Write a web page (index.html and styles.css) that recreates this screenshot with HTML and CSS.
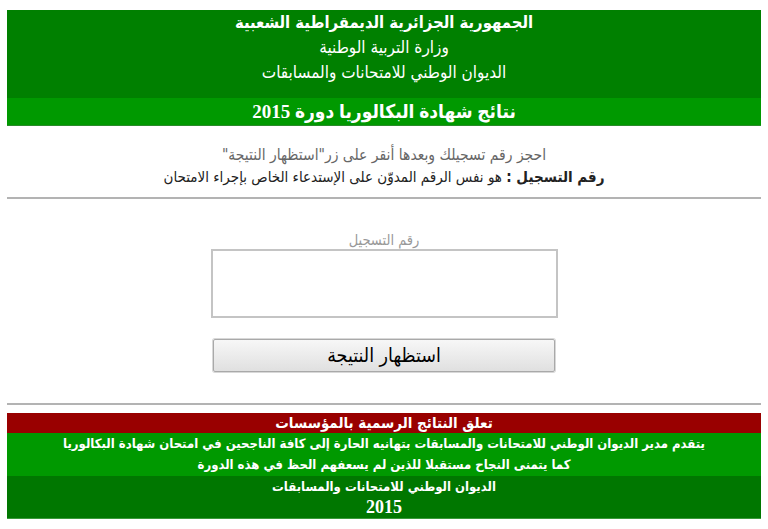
FILE: index.html
```html
<!DOCTYPE html>
<html lang="ar" dir="rtl">
<head>
  <meta charset="UTF-8">
  <title>نتائج شهادة البكالوريا دورة 2015</title>
  <link rel="stylesheet" href="styles.css">
</head>
<body>

  <!-- رأس الصفحة -->
  <div class="entete">
    <div class="titres">
      <p class="republique">الجمهورية الجزائرية الديمقراطية الشعبية</p>
      <p>وزارة التربية الوطنية</p>
      <p>الديوان الوطني للامتحانات والمسابقات</p>
    </div>
    <div class="session">نتائج شهادة البكالوريا دورة 2015</div>
  </div>

  <div class="consigne">
    <p class="gris">احجز رقم تسجيلك وبعدها أنقر على زر"استظهار النتيجة"</p>
    <p><strong>رقم التسجيل :</strong> هو نفس الرقم المدوّن على الإستدعاء الخاص بإجراء الامتحان</p>
  </div>

  <hr>

  <!-- نموذج البحث -->
  <form class="recherche" onsubmit="event.preventDefault()">
    <label for="matricule">رقم التسجيل</label>
    <textarea id="matricule"></textarea>
    <button type="submit">استظهار النتيجة</button>
  </form>

  <hr>

  <!-- التذييل -->
  <div class="pied">
    <div class="avis">تعلق النتائج الرسمية بالمؤسسات</div>
    <div class="felicitations">
      <p>يتقدم مدير الديوان الوطني للامتحانات والمسابقات بتهانيه الحارة إلى كافة الناجحين في امتحان شهادة البكالوريا</p>
      <p>كما يتمنى النجاح مستقبلا للذين لم يسعفهم الحظ في هذه الدورة</p>
    </div>
    <div class="signature">
      <p>الديوان الوطني للامتحانات والمسابقات</p>
      <p class="annee">2015</p>
    </div>
  </div>

</body>
</html>
```

FILE: styles.css
```css
body {
  font-family: "Liberation Serif", "DejaVu Sans", serif;
  background-color: #fff;
  margin: 0;
  padding: 10px 7px;
}

p {
  margin: 0;
}

.entete {
  color: #fff;
  text-align: center;
  border-bottom: 1px solid #2a8a2a;
}

.titres {
  background-color: #008000;
  padding: 0 0 13px;
}

.titres p {
  font-family: "DejaVu Sans Condensed", "DejaVu Sans", sans-serif;
  font-size: 17px;
  line-height: 25px;
}

.titres .republique {
  font-weight: bold;
  font-size: 16.5px;
}

.session {
  background-color: #009900;
  font-family: "Liberation Serif", "DejaVu Sans Condensed", serif;
  font-weight: bold;
  font-size: 19px;
  line-height: 27px;
}

.consigne {
  text-align: center;
  padding: 18px 0 9px;
  font-family: "DejaVu Sans Condensed", "DejaVu Sans", sans-serif;
  font-size: 15px;
  line-height: 22px;
  color: #222;
}

.consigne .gris {
  color: #666;
  font-size: 15.5px;
}

hr {
  border: none;
  border-top: 2px solid #b3b3b3;
  margin: 0;
}

.recherche {
  display: flex;
  flex-direction: column;
  align-items: center;
  padding: 32px 0 31px;
}

.recherche label {
  font-family: "DejaVu Sans Condensed", "DejaVu Sans", sans-serif;
  font-size: 14.5px;
  color: #999;
  line-height: 18px;
}

.recherche textarea {
  width: 343px;
  height: 65px;
  border: 2px solid #c4c4c4;
  margin: 0 0 21px;
  padding: 0;
  resize: none;
}

.recherche button {
  width: 342px;
  height: 33px;
  font-family: "DejaVu Sans Condensed", "DejaVu Sans", sans-serif;
  font-size: 19.5px;
  line-height: 1;
  color: #000;
  background: linear-gradient(#f7f7f7, #e0e0e0);
  border: 1px solid #a9a9a9;
  border-radius: 2px;
  box-shadow: 0 0 0 1px #d8d8d8;
  cursor: pointer;
}

.pied {
  margin-top: 8px;
  color: #fff;
  text-align: center;
  font-family: "DejaVu Sans Condensed", "DejaVu Sans", sans-serif;
  font-weight: bold;
  font-size: 13px;
  line-height: 21px;
}

.avis {
  background-color: #990000;
  font-size: 15px;
  line-height: 20px;
}

.felicitations {
  background-color: #009900;
  padding-bottom: 1px;
}

.signature {
  background-color: #007700;
  border-bottom: 1px solid #3a9a3a;
}

.signature .annee {
  font-family: "Liberation Serif", serif;
  font-size: 18px;
}
```
